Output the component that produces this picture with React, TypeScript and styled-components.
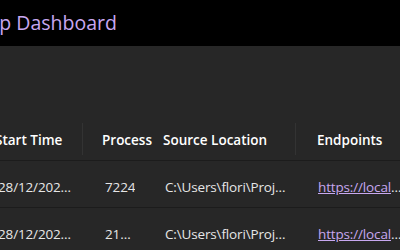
import React from "react";
import styled, { createGlobalStyle } from "styled-components";

const GlobalStyle = createGlobalStyle`
  html, body {
    margin: 0;
    padding: 0;
    background: #272727;
  }
  body {
    font-family: "Open Sans", "Noto Sans", "Liberation Sans", sans-serif;
  }
`;

const Page = styled.div`
  width: 400px;
  height: 250px;
  overflow: hidden;
  background: #272727;
  display: flex;
  flex-direction: column;
`;

const HeaderBar = styled.div`
  height: 46px;
  flex-shrink: 0;
  background: #000000;
  display: flex;
  align-items: center;
`;

const AppTitle = styled.div`
  margin-left: -25px;
  color: #c8a8f0;
  font-size: 19.5px;
  white-space: nowrap;
  padding-bottom: 2px;
`;

const Main = styled.div`
  padding-top: 72px;
  margin-left: -25px;
`;

const Grid = styled.div`
  display: grid;
  grid-template-columns: 108px 60px 153px 140px;
`;

const HeadCell = styled.div<{ $divider?: boolean; $pad: number }>`
  position: relative;
  height: 43px;
  display: flex;
  align-items: center;
  padding-left: ${(p) => p.$pad}px;
  padding-top: 2px;
  box-sizing: border-box;
  color: #ffffff;
  font-size: 13.5px;
  font-weight: 600;
  white-space: nowrap;
  border-bottom: 1px solid #1c1c1c;

  &::after {
    content: "";
    display: ${(p) => (p.$divider ? "block" : "none")};
    position: absolute;
    right: 0;
    top: 5px;
    bottom: 5px;
    width: 1px;
    background: #333333;
  }
`;

const Cell = styled.div<{ $pad: number; $right: number }>`
  height: 47px;
  display: flex;
  align-items: center;
  padding: 6px ${(p) => p.$right}px 0 ${(p) => p.$pad}px;
  box-sizing: border-box;
  border-bottom: 1px solid #1c1c1c;
  color: #e6e6e6;
  font-size: 13.5px;
  letter-spacing: -0.15px;
  min-width: 0;
`;

const CellText = styled.span`
  display: block;
  overflow: hidden;
  white-space: nowrap;
  text-overflow: ellipsis;
  min-width: 0;
`;

const EndpointLink = styled.a`
  color: #c8a8f0;
  text-decoration: underline;
`;

const columns = [
  { title: "Start Time", pad: 20, divider: true },
  { title: "Process", pad: 19, divider: false },
  { title: "Source Location", pad: 20, divider: true },
  { title: "Endpoints", pad: 21, divider: false },
];

const rows = [
  {
    start: "28/12/2023 10:42:17",
    pid: "7224",
    source: "C:\\Users\\flori\\Projects\\AspireApp\\AspireApp.ApiService",
    endpoint: "https://localhost:7301",
  },
  {
    start: "28/12/2023 10:42:18",
    pid: "21396",
    source: "C:\\Users\\flori\\Projects\\AspireApp\\AspireApp.Web",
    endpoint: "https://localhost:7142",
  },
];

const App = () => {
  return (
    <Page>
      <GlobalStyle />
      <HeaderBar>
        <AppTitle>App Dashboard</AppTitle>
      </HeaderBar>
      <Main>
        <Grid>
          {columns.map((c) => (
            <HeadCell key={c.title} $pad={c.pad} $divider={c.divider}>
              {c.title}
            </HeadCell>
          ))}
          {rows.map((r) => (
            <React.Fragment key={r.pid}>
              <Cell $pad={23} $right={8}>
                <CellText>{r.start}</CellText>
              </Cell>
              <Cell $pad={22} $right={6.5}>
                <CellText>{r.pid}</CellText>
              </Cell>
              <Cell $pad={22} $right={6}>
                <CellText>{r.source}</CellText>
              </Cell>
              <Cell $pad={22} $right={29}>
                <CellText>
                  <EndpointLink href="#">{r.endpoint}</EndpointLink>
                </CellText>
              </Cell>
            </React.Fragment>
          ))}
        </Grid>
      </Main>
    </Page>
  );
};

export default App;
